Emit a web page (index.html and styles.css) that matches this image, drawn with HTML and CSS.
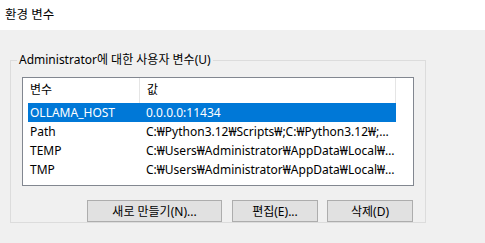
FILE: index.html
```html
<!DOCTYPE html>
<html lang="ko">
<head>
  <meta charset="UTF-8" />
  <title>환경 변수</title>
  <link rel="stylesheet" href="styles.css">
</head>
<body>
  <header class="titlebar">환경 변수</header>

  <main class="content">
    <fieldset class="group">
      <legend>Administrator에 대한 사용자 변수(U)</legend>

      <div class="listview">
        <div class="lv-head">
          <div class="col-name">변수</div>
          <div class="col-value">값</div>
        </div>
        <div class="lv-row selected">
          <div class="col-name">OLLAMA_HOST</div>
          <div class="col-value">0.0.0.0:11434</div>
        </div>
        <div class="lv-row">
          <div class="col-name">Path</div>
          <div class="col-value">C:₩Python3.12₩Scripts₩;C:₩Python3.12₩;C:₩Users₩Administrator₩AppData₩Local₩Microsoft₩WindowsApps;</div>
        </div>
        <div class="lv-row">
          <div class="col-name">TEMP</div>
          <div class="col-value">C:₩Users₩Administrator₩AppData₩Local₩Temp</div>
        </div>
        <div class="lv-row">
          <div class="col-name">TMP</div>
          <div class="col-value">C:₩Users₩Administrator₩AppData₩Local₩Temp</div>
        </div>
      </div>

      <div class="actions">
        <button class="btn btn-wide">새로 만들기(N)...</button>
        <button class="btn">편집(E)...</button>
        <button class="btn">삭제(D)</button>
      </div>
    </fieldset>
  </main>
</body>
</html>
```

FILE: styles.css
```css
body {
  margin: 0;
  padding: 0;
  width: 485px;
  height: 243px;
  overflow: hidden;
  background-color: #f0f0f0;
  font-family: 'Noto Sans', 'Noto Sans CJK KR', sans-serif;
  font-size: 12px;
  color: #000;
}

.titlebar {
  height: 30px;
  line-height: 30px;
  padding-left: 5px;
  font-size: 12.5px;
  background-color: #fff;
}

.content {
  padding: 22px 0 0 10px;
}

.group {
  width: 392px;
  min-width: 0;
  height: 160px;
  margin: 0;
  padding: 9px 11px 0 11px;
  border: 1px solid #dcdcdc;
}

.group legend {
  padding: 0 2px;
  margin-left: -5px;
  line-height: 16px;
}

/* Liste des variables */
.listview {
  height: 107px;
  border: 1px solid #828790;
  background-color: #fff;
  padding: 0 17px 0 5px;
}

.lv-head {
  display: flex;
  height: 25px;
  line-height: 24px;
}

.lv-head .col-name {
  border-right: 1px solid #e5e5e5;
}

.lv-head .col-value {
  border-right: 1px solid #e5e5e5;
}

.lv-row {
  display: flex;
  height: 19px;
  line-height: 19px;
}

.col-name {
  width: 109px;
  padding-left: 2px;
  flex-shrink: 0;
}

.col-value {
  flex: 1;
  min-width: 0;
  padding: 0 1px 0 7px;
  white-space: nowrap;
  overflow: hidden;
  text-overflow: ellipsis;
}

.lv-row.selected {
  background-color: #0078d7;
  color: #fff;
}

/* Boutons */
.actions {
  display: flex;
  justify-content: flex-end;
  gap: 9px;
  margin-top: 14px;
  padding-right: 1px;
}

.btn {
  height: 22px;
  width: 86px;
  padding: 0;
  background-color: #e1e1e1;
  border: 1px solid #adadad;
  font-family: 'Noto Sans', 'Noto Sans CJK KR', sans-serif;
  font-size: 12px;
  color: #000;
}

.btn-wide {
  width: 135px;
  margin-right: 1px;
}
```
